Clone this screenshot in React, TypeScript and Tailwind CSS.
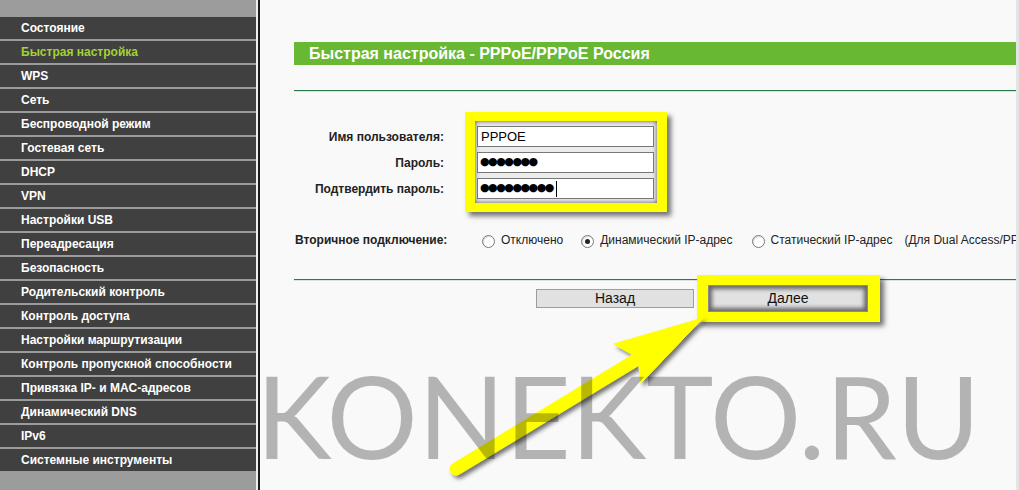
import React from "react";

const menu = [
  "Состояние",
  "Быстрая настройка",
  "WPS",
  "Сеть",
  "Беспроводной режим",
  "Гостевая сеть",
  "DHCP",
  "VPN",
  "Настройки USB",
  "Переадресация",
  "Безопасность",
  "Родительский контроль",
  "Контроль доступа",
  "Настройки маршрутизации",
  "Контроль пропускной способности",
  "Привязка IP- и MAC-адресов",
  "Динамический DNS",
  "IPv6",
  "Системные инструменты",
];

function Radio({ checked, label }: { checked?: boolean; label: string }) {
  return (
    <div className="flex items-center">
      <span className="w-[13px] h-[13px] mt-[3px] rounded-full border border-[#7a7a7a] bg-white flex items-center justify-center shadow-[inset_1px_1px_1px_rgba(0,0,0,0.15)]">
        {checked && <span className="w-[5px] h-[5px] rounded-full bg-[#222]" />}
      </span>
      <span className="ml-[6px] whitespace-nowrap">{label}</span>
    </div>
  );
}

export default function App() {
  return (
    <div className="relative w-[1019px] h-[490px] overflow-hidden flex bg-[#f9f9f9] font-['Liberation_Sans',Arial,sans-serif]">
      {/* Sidebar */}
      <aside className="w-[256px] shrink-0 bg-[#9c9c9c] pt-[17px] flex flex-col gap-[2px]">
        {menu.map((m, i) => (
          <div
            key={m}
            className={
              "h-[22px] shrink-0 bg-[#404040] pl-[21px] flex items-center text-[12px] font-bold " +
              (i === 1 ? "text-[#a3d13a]" : "text-white")
            }
          >
            {m}
          </div>
        ))}
      </aside>
      <div className="w-[2px] shrink-0 bg-[#ededed]" />
      <div className="w-[2px] shrink-0 bg-[#1c1c1c]" />

      {/* Content */}
      <main className="flex-1 min-w-0 overflow-hidden pl-[34px] pt-[42px] text-[12px] text-black">
        <div className="h-[23px] bg-[#69b834] pl-[15px] flex items-center text-white font-bold text-[16px] whitespace-nowrap">
          Быстрая настройка - PPPoE/PPPoE Россия
        </div>
        <div className="mt-[25px] border-t border-[#2c7a4b] border-b border-b-[#d3e6d9]" />

        {/* Credentials */}
        <div className="mt-[20px] flex">
          <div className="w-[150px] pt-[14px] flex flex-col gap-[5px] font-bold text-[#222]">
            <div className="h-[21px] flex items-center justify-end">Имя пользователя:</div>
            <div className="h-[21px] flex items-center justify-end">Пароль:</div>
            <div className="h-[21px] flex items-center justify-end">Подтвердить пароль:</div>
          </div>
          <div className="relative z-10 ml-[21px] bg-[#ffff00] pt-[9px] pb-[9px] pl-[10px] pr-[10px] shadow-[4px_4px_5px_rgba(0,0,0,0.55)]">
            <div className="bg-[#ececec] pt-[5px] pb-[4px] pl-[2px] pr-[3px] flex flex-col gap-[5px] shadow-[inset_0_0_5px_rgba(0,0,0,0.65)]">
              <div className="w-[177px] h-[21px] border border-[#777] bg-white pl-[3px] flex items-center text-[13px]">
                PPPOE
              </div>
              <div className="w-[177px] h-[21px] border border-[#777] bg-white pl-[2px] flex items-center text-[11px] tracking-[-1.5px] font-['DejaVu_Sans',sans-serif]">
                ●●●●●●●
              </div>
              <div className="w-[177px] h-[21px] border border-[#777] bg-white pl-[2px] flex items-center text-[11px] tracking-[-1.5px] font-['DejaVu_Sans',sans-serif]">
                ●●●●●●●●●
                <span className="ml-[3px] w-[1px] h-[16px] bg-black" />
              </div>
            </div>
          </div>
        </div>

        {/* Secondary connection */}
        <div className="mt-[20px] h-[16px] flex items-center whitespace-nowrap text-[#222]">
          <div className="w-[188px] shrink-0 pl-[1px] font-bold">Вторичное подключение:</div>
          <Radio label="Отключено" />
          <div className="w-[18px] shrink-0" />
          <Radio checked label="Динамический IP-адрес" />
          <div className="w-[19px] shrink-0" />
          <Radio label="Статический IP-адрес" />
          <span className="ml-[12px]">(Для Dual Access/PPPoE)</span>
        </div>

        <div className="mt-[31px] border-t border-[#2c7a4b] border-b border-b-[#d3e6d9]" />

        {/* Buttons */}
        <div className="-mt-[6px] pl-[242px] flex items-center">
          <button className="w-[158px] h-[19px] border border-[#9d9d9d] bg-[#e1e1e1] text-[14px] text-[#111] flex items-center justify-center">
            Назад
          </button>
          <div className="relative z-10 ml-[3px] bg-[#ffff00] pt-[10px] pb-[10px] pl-[11px] pr-[12px] shadow-[4px_4px_5px_rgba(0,0,0,0.55)]">
            <button className="w-[160px] h-[27px] border border-[#8a8a8a] bg-[#e1e1e1] text-[14px] text-[#111] flex items-center justify-center shadow-[inset_0_0_4px_3px_rgba(0,0,0,0.55)]">
              Далее
            </button>
          </div>
        </div>
      </main>
      <div className="w-[3px] shrink-0 bg-[#e4e4e4]" />

      {/* Arrow annotation */}
      <svg className="absolute inset-0 pointer-events-none z-20" width="1019" height="490" viewBox="0 0 1019 490">
        <defs>
          <filter id="sh" x="-20%" y="-20%" width="140%" height="140%">
            <feDropShadow dx="3" dy="3" stdDeviation="2" floodColor="#000" floodOpacity="0.55" />
          </filter>
        </defs>
        <g filter="url(#sh)" fill="#ffff00" stroke="#ffff00">
          <line x1="456" y1="469" x2="644" y2="355" strokeWidth="13" strokeLinecap="round" />
          <polygon points="703,318 614,344 638,358 641,383" strokeWidth="1" strokeLinejoin="round" />
        </g>
      </svg>

      {/* Watermark */}
      <div className="absolute left-[256px] top-[358px] z-30 pointer-events-none text-[114px] leading-none font-['Lato',sans-serif] text-[rgba(0,0,0,0.28)] whitespace-nowrap">
        KONEKTO.RU
      </div>
    </div>
  );
}
